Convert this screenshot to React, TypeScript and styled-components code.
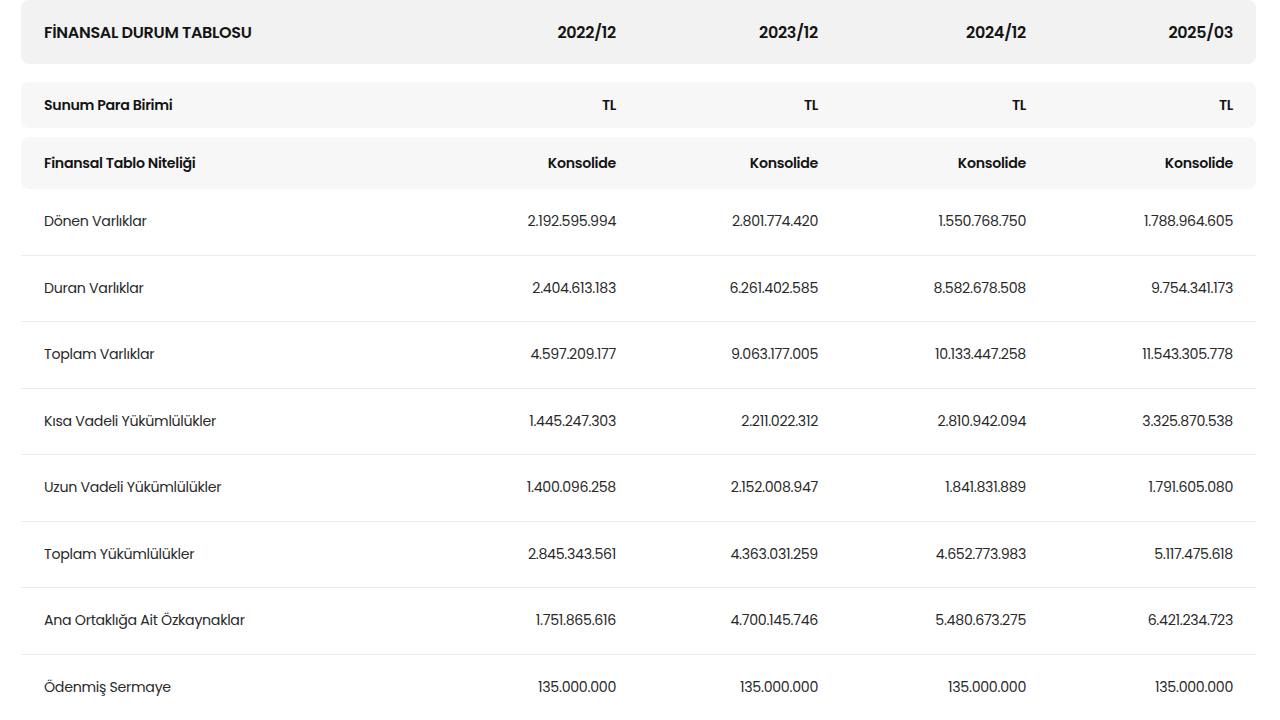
import React from "react";
import styled, { createGlobalStyle } from "styled-components";

const Global = createGlobalStyle`
  body { margin: 0; background: #fff; font-family: "Poppins", "Inter", "Noto Sans", sans-serif; color: #1c1c1c; }
`;

const Table = styled.div`
  margin: 0 24px 0 21px;
  display: flex;
  flex-direction: column;
`;

const Row = styled.div<{ $variant: "head" | "meta" | "data"; $h: number; $mb?: number }>`
  display: grid;
  grid-template-columns: 370px 202px 202px 208px 207px;
  align-items: center;
  padding: 0 23px;
  height: ${(p) => p.$h}px;
  margin-bottom: ${(p) => p.$mb ?? 0}px;
  box-sizing: border-box;
  border-radius: ${(p) => (p.$variant === "data" ? "0" : "8px")};
  background: ${(p) => (p.$variant === "head" ? "#f2f2f2" : p.$variant === "meta" ? "#f7f7f7" : "#fff")};
  border-bottom: ${(p) => (p.$variant === "data" ? "1px solid #ececec" : "none")};
  font-size: ${(p) => (p.$variant === "head" ? "16px" : "14.2px")};
  font-weight: ${(p) => (p.$variant === "data" ? 400 : 600)};
  color: ${(p) => (p.$variant === "data" ? "#2a2a2a" : "#141414")};
  letter-spacing: ${(p) => (p.$variant === "data" ? "-0.3px" : "-0.3px")};
`;

const Cell = styled.div<{ $right?: boolean }>`
  text-align: ${(p) => (p.$right ? "right" : "left")};
  white-space: nowrap;
`;

const data: [string, string[]][] = [
  ["Dönen Varlıklar", ["2.192.595.994", "2.801.774.420", "1.550.768.750", "1.788.964.605"]],
  ["Duran Varlıklar", ["2.404.613.183", "6.261.402.585", "8.582.678.508", "9.754.341.173"]],
  ["Toplam Varlıklar", ["4.597.209.177", "9.063.177.005", "10.133.447.258", "11.543.305.778"]],
  ["Kısa Vadeli Yükümlülükler", ["1.445.247.303", "2.211.022.312", "2.810.942.094", "3.325.870.538"]],
  ["Uzun Vadeli Yükümlülükler", ["1.400.096.258", "2.152.008.947", "1.841.831.889", "1.791.605.080"]],
  ["Toplam Yükümlülükler", ["2.845.343.561", "4.363.031.259", "4.652.773.983", "5.117.475.618"]],
  ["Ana Ortaklığa Ait Özkaynaklar", ["1.751.865.616", "4.700.145.746", "5.480.673.275", "6.421.234.723"]],
  ["Ödenmiş Sermaye", ["135.000.000", "135.000.000", "135.000.000", "135.000.000"]],
];

const RowOf = ({ label, vals, v, h, mb }: { label: string; vals: string[]; v: "head" | "meta" | "data"; h: number; mb?: number }) => (
  <Row $variant={v} $h={h} $mb={mb}>
    <Cell>{label}</Cell>
    {vals.map((x, i) => (
      <Cell $right key={i}>{x}</Cell>
    ))}
  </Row>
);

export default function App() {
  return (
    <>
      <Global />
      <Table>
        <RowOf v="head" h={64} mb={18} label="FİNANSAL DURUM TABLOSU" vals={["2022/12", "2023/12", "2024/12", "2025/03"]} />
        <RowOf v="meta" h={46} mb={9} label="Sunum Para Birimi" vals={["TL", "TL", "TL", "TL"]} />
        <RowOf v="meta" h={52} label="Finansal Tablo Niteliği" vals={["Konsolide", "Konsolide", "Konsolide", "Konsolide"]} />
        {data.map(([l, vals]) => (
          <RowOf key={l} v="data" h={66.5} label={l} vals={vals} />
        ))}
      </Table>
    </>
  );
}
